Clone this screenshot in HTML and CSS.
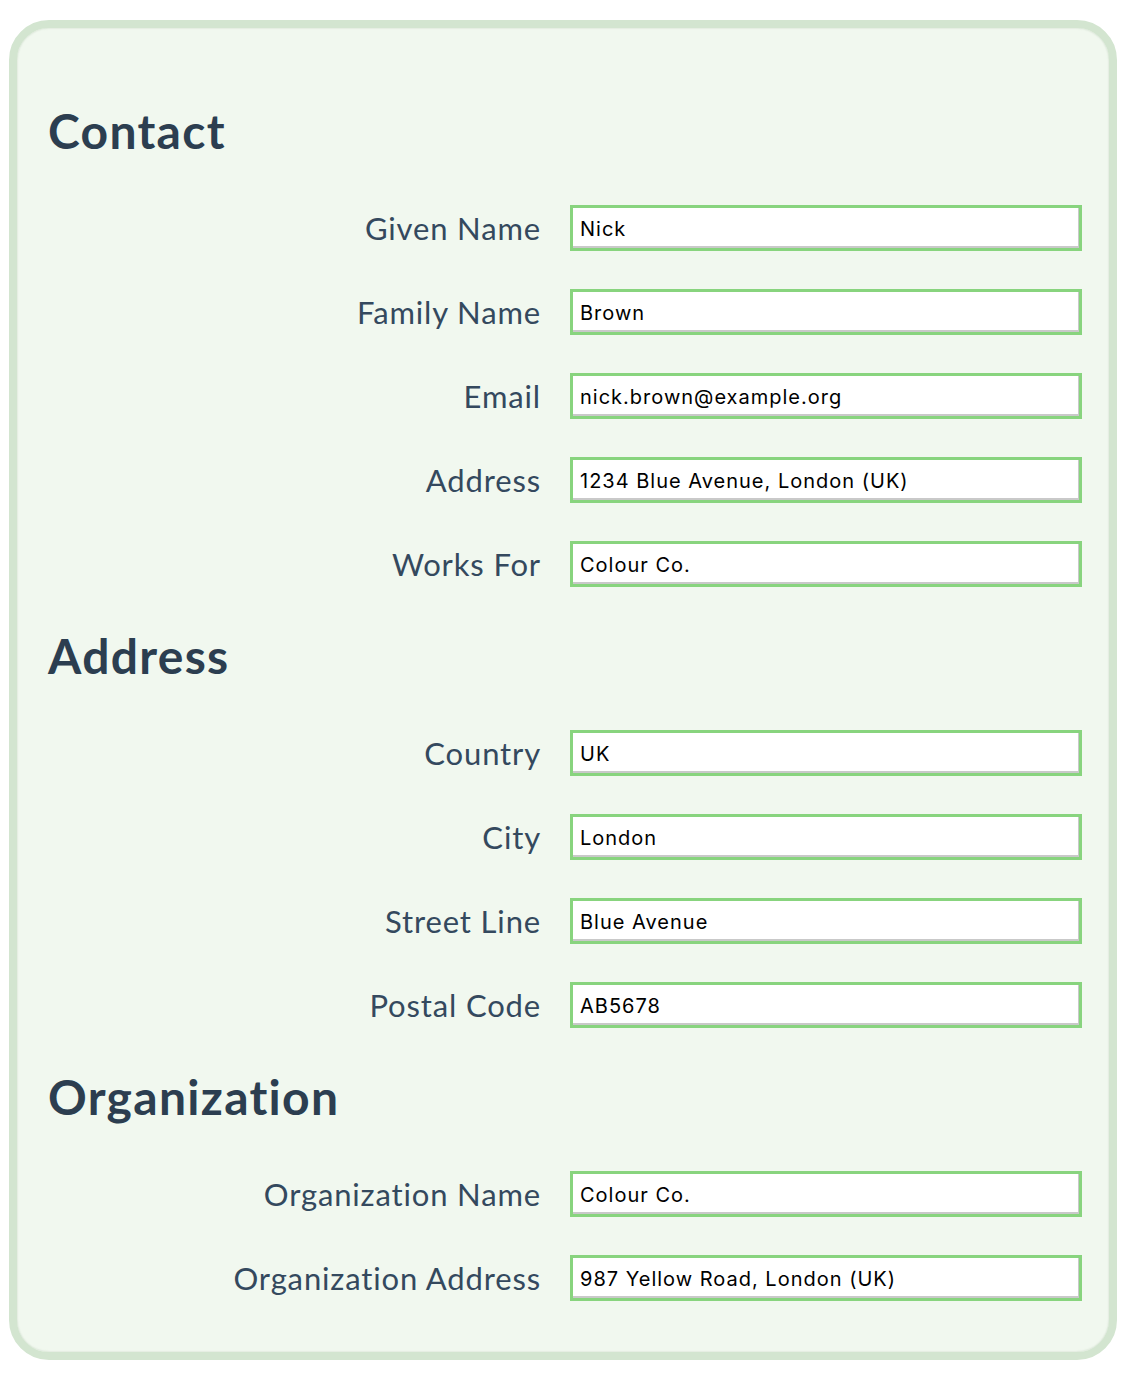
FILE: index.html
```html
<!DOCTYPE html>
<html lang="en">
<head>
<meta charset="utf-8">
<title>Contact Form</title>
<link rel="stylesheet" href="styles.css">
</head>
<body>
<div class="page">
  <form class="card">
    <section class="group">
      <h2 class="group-title">Contact</h2>
      <div class="fields">
        <label class="row"><span class="label">Given Name</span><input class="field" type="text" value="Nick"></label>
        <label class="row"><span class="label">Family Name</span><input class="field" type="text" value="Brown"></label>
        <label class="row"><span class="label">Email</span><input class="field" type="text" value="nick.brown@example.org"></label>
        <label class="row"><span class="label">Address</span><input class="field" type="text" value="1234 Blue Avenue, London (UK)"></label>
        <label class="row"><span class="label">Works For</span><input class="field" type="text" value="Colour Co."></label>
      </div>
    </section>
    <section class="group">
      <h2 class="group-title">Address</h2>
      <div class="fields">
        <label class="row"><span class="label">Country</span><input class="field" type="text" value="UK"></label>
        <label class="row"><span class="label">City</span><input class="field" type="text" value="London"></label>
        <label class="row"><span class="label">Street Line</span><input class="field" type="text" value="Blue Avenue"></label>
        <label class="row"><span class="label">Postal Code</span><input class="field" type="text" value="AB5678"></label>
      </div>
    </section>
    <section class="group">
      <h2 class="group-title">Organization</h2>
      <div class="fields">
        <label class="row"><span class="label">Organization Name</span><input class="field" type="text" value="Colour Co."></label>
        <label class="row"><span class="label">Organization Address</span><input class="field" type="text" value="987 Yellow Road, London (UK)"></label>
      </div>
    </section>
  </form>
</div>
</body>
</html>
```
FILE: styles.css
```css
html, body {
  margin: 0;
  padding: 0;
  background: #ffffff;
}

.page {
  padding: 20px 13px 15px 9px;
}

.card {
  box-sizing: border-box;
  width: 1108px;
  background: #f1f8ef;
  border: 8px solid #d3e5d0;
  border-radius: 40px;
  box-shadow: inset 0 0 2px rgba(120, 150, 115, 0.35);
  padding: 75px 27px 51px 31px;
  display: flex;
  flex-direction: column;
  gap: 41px;
  font-family: "Lato", "Noto Sans", sans-serif;
}

.group {
  display: flex;
  flex-direction: column;
}

.group-title {
  margin: 0;
  font-family: "Lato", "Noto Sans", sans-serif;
  font-weight: 700;
  font-size: 48px;
  line-height: 56px;
  letter-spacing: 1.3px;
  color: #2c3e50;
}

.fields {
  margin-top: 46px;
  display: flex;
  flex-direction: column;
  gap: 38px;
}

.row {
  display: grid;
  grid-template-columns: 1fr 512px;
  column-gap: 29px;
  align-items: center;
}

.label {
  text-align: right;
  font-size: 31px;
  line-height: 40px;
  font-weight: 400;
  letter-spacing: 0.85px;
  color: #34495e;
}

.field {
  box-sizing: border-box;
  width: 512px;
  height: 46px;
  margin: 0;
  padding: 2px 7px 0;
  border: 3px solid #88d47e;
  border-radius: 0;
  background: #ffffff;
  box-shadow: inset -1px -2px 0 #c9c9c9;
  font-family: "Inter", "Liberation Sans", sans-serif;
  font-size: 20px;
  letter-spacing: 1px;
  color: #000000;
  outline: none;
}
```
